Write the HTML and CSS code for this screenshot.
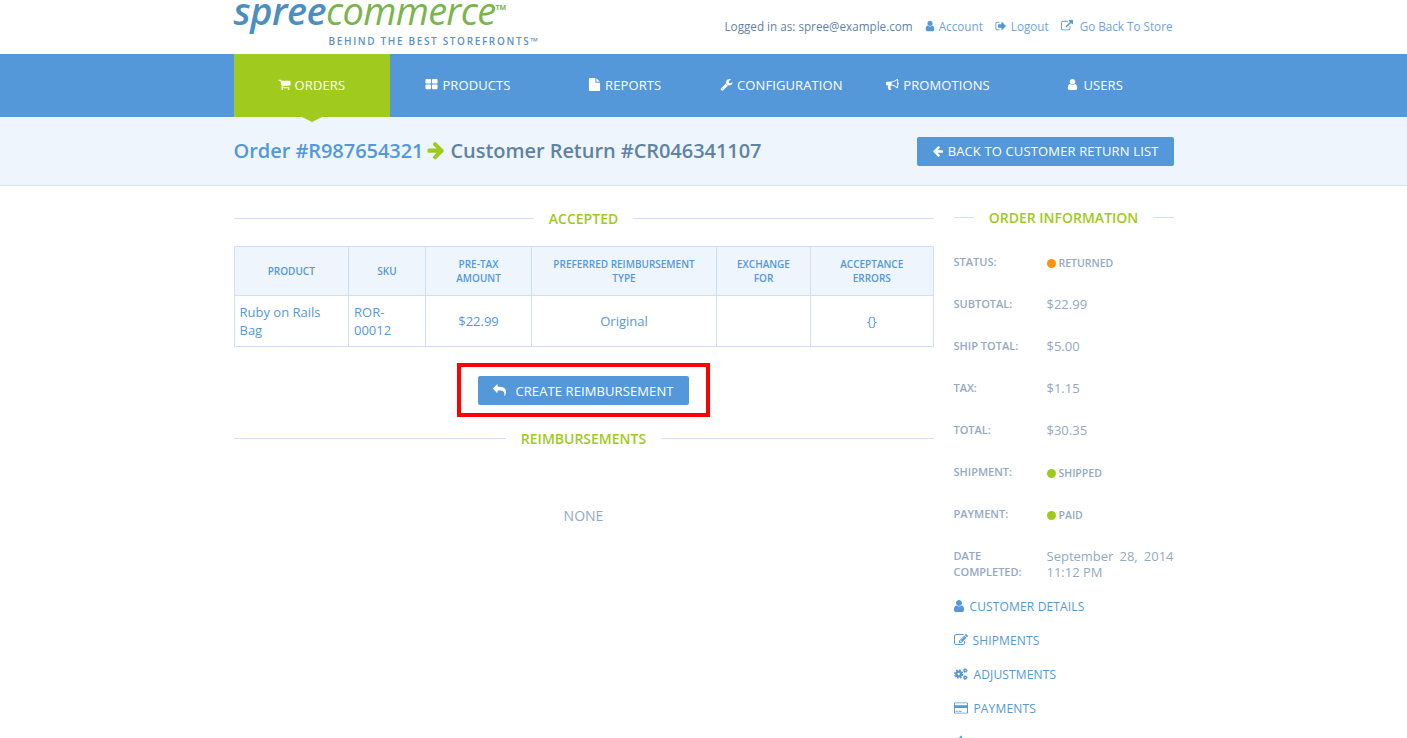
FILE: index.html
```html
<!DOCTYPE html>
<html>
<head>
    <meta charset="UTF-8">
    <title>Customer Return</title>
    <link rel="stylesheet" href="styles.css">
</head>
<body>

<svg class="sprite" xmlns="http://www.w3.org/2000/svg">
    <symbol id="i-user" viewBox="0 0 1792 1792"><path d="M1536 1399q0 109-62.5 187t-150.5 78h-854q-88 0-150.5-78t-62.5-187q0-85 8.5-160.5t31.5-152 58.5-131 94-89 134.5-34.5q131 128 313 128t313-128q76 0 134.5 34.5t94 89 58.5 131 31.5 152 8.5 160.5zm-256-887q0 159-112.5 271.5t-271.5 112.5-271.5-112.5-112.5-271.5 112.5-271.5 271.5-112.5 271.5 112.5 112.5 271.5z"/></symbol>
    <symbol id="i-cart" viewBox="0 0 1792 1792"><path d="M704 1536q0 52-38 90t-90 38-90-38-38-90 38-90 90-38 90 38 38 90zm896 0q0 52-38 90t-90 38-90-38-38-90 38-90 90-38 90 38 38 90zm128-1088v512q0 24-16.5 42.5t-40.5 21.5l-1044 122q13 60 13 70 0 16-24 64h920q26 0 45 19t19 45-19 45-45 19h-1024q-26 0-45-19t-19-45q0-11 8-31.5t16-36 21.5-40 15.5-29.5l-177-823h-204q-26 0-45-19t-19-45 19-45 45-19h256q16 0 28.5 6.5t19.5 15.5 13 24.5 8 26 5.5 29.5 4.5 26h1201q26 0 45 19t19 45z"/></symbol>
    <symbol id="i-grid" viewBox="0 0 1792 1792"><path d="M832 1024v384q0 52-38 90t-90 38h-512q-52 0-90-38t-38-90v-384q0-52 38-90t90-38h512q52 0 90 38t38 90zm0-768v384q0 52-38 90t-90 38h-512q-52 0-90-38t-38-90v-384q0-52 38-90t90-38h512q52 0 90 38t38 90zm896 768v384q0 52-38 90t-90 38h-512q-52 0-90-38t-38-90v-384q0-52 38-90t90-38h512q52 0 90 38t38 90zm0-768v384q0 52-38 90t-90 38h-512q-52 0-90-38t-38-90v-384q0-52 38-90t90-38h512q52 0 90 38t38 90z"/></symbol>
    <symbol id="i-file" viewBox="0 0 1792 1792"><path d="M1152 512v-472q22 14 36 28l408 408q14 14 28 36h-472zm-128 32q0 40 28 68t68 28h544v1056q0 40-28 68t-68 28h-1344q-40 0-68-28t-28-68v-1600q0-40 28-68t68-28h800v544z"/></symbol>
    <symbol id="i-wrench" viewBox="0 0 1792 1792"><path d="M448 1472q0-26-19-45t-45-19-45 19-19 45 19 45 45 19 45-19 19-45zm644-420l-682 682q-37 37-90 37-52 0-91-37l-106-108q-38-36-38-90 0-53 38-91l681-681q39 98 114.5 173.5t173.5 114.5zm634-435q0 39-23 106-47 134-164.5 217.5t-258.5 83.5q-185 0-316.5-131.5t-131.5-316.5 131.5-316.5 316.5-131.5q58 0 121.5 16.5t107.5 46.5q16 11 16 28t-16 28l-293 169v224l193 107q5-3 79-48.5t135.5-81 70.5-35.5q15 0 23.5 10t8.5 25z"/></symbol>
    <symbol id="i-bullhorn" viewBox="0 0 1792 1792"><path d="M1664 640q53 0 90.5 37.5t37.5 90.5-37.5 90.5-90.5 37.5v384q0 52-38 90t-90 38q-417-347-812-380-58 19-91 66t-31 100.5 40 92.5q-20 33-23 65.5t6 58 33.5 55 48 50 61.5 50.5q-29 58-111.5 83t-168.5 11.5-132-55.5q-7-23-29.5-87.5t-32-94.5-23-89-15-101 3.5-98.5 22-110.5h-122q-66 0-113-47t-47-113v-192q0-66 47-113t113-47h480q435 0 896-384 52 0 90 38t38 90v384zm-128 604v-954q-394 302-768 343v270q377 42 768 341z"/></symbol>
    <symbol id="i-right" viewBox="0 0 1792 1792"><path d="M1600 960q0 54-37 91l-651 651q-39 37-91 37-51 0-90-37l-75-75q-38-38-38-91t38-91l293-293h-704q-52 0-84.5-37.5t-32.5-90.5v-128q0-53 32.5-90.5t84.5-37.5h704l-293-294q-38-36-38-90t38-90l75-75q38-38 90-38 53 0 91 38l651 651q37 35 37 90z"/></symbol>
    <symbol id="i-left" viewBox="0 0 1792 1792"><path d="M1664 896v128q0 53-32.5 90.5t-84.5 37.5h-704l293 294q38 36 38 90t-38 90l-75 76q-37 37-90 37-52 0-91-37l-651-652q-37-37-37-90 0-52 37-91l651-650q38-38 91-38 52 0 90 38l75 74q38 38 38 91t-38 91l-293 293h704q52 0 84.5 37.5t32.5 90.5z"/></symbol>
    <symbol id="i-reply" viewBox="0 0 1792 1792"><path d="M1792 1120q0 166-127 451-3 7-10.5 24t-13.5 30-13 22q-12 17-28 17-15 0-23.5-10t-8.5-25q0-9 2.5-26.5t2.5-23.5q5-68 5-123 0-101-17.5-181t-48.5-138.5-80-101-105.5-69.5-133-42.5-154-21.5-175.5-6h-224v256q0 26-19 45t-45 19-45-19l-512-512q-19-19-19-45t19-45l512-512q19-19 45-19t45 19 19 45v256h224q713 0 875 403 53 134 53 333z"/></symbol>
    <symbol id="i-signout" viewBox="0 0 1792 1792"><path d="M704 1440q0 4 1 20t.5 26.5-3 23.5-10 19.5-20.5 6.5h-320q-119 0-203.5-84.5t-84.5-203.5v-704q0-119 84.5-203.5t203.5-84.5h320q13 0 22.5 9.5t9.5 22.5q0 4 1 20t.5 26.5-3 23.5-10 19.5-20.5 6.5h-320q-66 0-113 47t-47 113v704q0 66 47 113t113 47h312l11.5 1 11.5 3 8 5.5 7 9 2 13.5zm928-544q0 26-19 45l-544 544q-19 19-45 19t-45-19-19-45v-288h-448q-26 0-45-19t-19-45v-384q0-26 19-45t45-19h448v-288q0-26 19-45t45-19 45 19l544 544q19 19 19 45z"/></symbol>
    <symbol id="i-external" viewBox="0 0 1792 1792"><path d="M1408 928v320q0 119-84.5 203.5t-203.5 84.5h-832q-119 0-203.5-84.5t-84.5-203.5v-832q0-119 84.5-203.5t203.5-84.5h704q14 0 23 9t9 23v64q0 14-9 23t-23 9h-704q-66 0-113 47t-47 113v832q0 66 47 113t113 47h832q66 0 113-47t47-113v-320q0-14 9-23t23-9h64q14 0 23 9t9 23zm384-864v512q0 26-19 45t-45 19-45-19l-176-176-652 652q-10 10-23 10t-23-10l-114-114q-10-10-10-23t10-23l652-652-176-176q-19-19-19-45t19-45 45-19h512q26 0 45 19t19 45z"/></symbol>
    <symbol id="i-edit" viewBox="0 0 1792 1792"><path d="M888 1184l116-116-152-152-116 116v56h96v96h56zm440-720q-16-16-33 1l-350 350q-17 17-1 33t33-1l350-350q17-17 1-33zm80 594v190q0 119-84.5 203.5t-203.5 84.5h-832q-119 0-203.5-84.5t-84.5-203.5v-832q0-119 84.5-203.5t203.5-84.5h832q63 0 117 25 15 7 18 23 3 17-9 29l-49 49q-14 14-32 8-23-6-45-6h-832q-66 0-113 47t-47 113v832q0 66 47 113t113 47h832q66 0 113-47t47-113v-126q0-13 9-22l64-64q15-15 35-7t20 29zm-96-738l288 288-672 672h-288v-288zm444 132l-92 92-288-288 92-92q28-28 68-28t68 28l152 152q28 28 28 68t-28 68z"/></symbol>
    <symbol id="i-cogs" viewBox="0 0 1792 1792">
        <circle cx="600" cy="900" r="300" fill="none" stroke="currentColor" stroke-width="300"/>
        <circle cx="600" cy="900" r="510" fill="none" stroke="currentColor" stroke-width="180" stroke-dasharray="220 180"/>
        <circle cx="1440" cy="450" r="150" fill="none" stroke="currentColor" stroke-width="170"/>
        <circle cx="1440" cy="450" r="270" fill="none" stroke="currentColor" stroke-width="110" stroke-dasharray="105 107"/>
        <circle cx="1440" cy="1350" r="150" fill="none" stroke="currentColor" stroke-width="170"/>
        <circle cx="1440" cy="1350" r="270" fill="none" stroke="currentColor" stroke-width="110" stroke-dasharray="105 107"/>
    </symbol>
    <symbol id="i-card" viewBox="0 0 1920 1792"><path d="M1760 128q66 0 113 47t47 113v1216q0 66-47 113t-113 47h-1600q-66 0-113-47t-47-113v-1216q0-66 47-113t113-47h1600zm-1600 128q-13 0-22.5 9.5t-9.5 22.5v224h1664v-224q0-13-9.5-22.5t-22.5-9.5h-1600zm1600 1280q13 0 22.5-9.5t9.5-22.5v-608h-1664v608q0 13 9.5 22.5t22.5 9.5h1600zm-1504-128v-128h256v128h-256zm384 0v-128h384v128h-384z"/></symbol>
</svg>

<div class="m-top">
    <div class="wrap top-row">
        <div class="logo">
            <div class="logo-name"><span class="logo-spree">spree</span><span class="logo-commerce">commerce</span><span class="logo-tm">TM</span></div>
            <div class="logo-tag">BEHIND THE BEST STOREFRONTS&trade;</div>
        </div>
        <div class="user-nav">
            <span class="logged">Logged in as: spree@example.com</span>
            <a href="#"><svg class="ico"><use href="#i-user"/></svg>Account</a>
            <a href="#"><svg class="ico ico-out"><use href="#i-signout"/></svg>Logout</a>
            <a href="#"><svg class="ico ico-ext"><use href="#i-external"/></svg>Go Back To Store</a>
        </div>
    </div>
</div>

<div class="m-nav">
    <div class="wrap nav-row">
        <a href="#" class="nav-item on"><svg class="ico"><use href="#i-cart"/></svg>ORDERS</a>
        <a href="#" class="nav-item"><svg class="ico"><use href="#i-grid"/></svg>PRODUCTS</a>
        <a href="#" class="nav-item"><svg class="ico"><use href="#i-file"/></svg>REPORTS</a>
        <a href="#" class="nav-item"><svg class="ico"><use href="#i-wrench"/></svg>CONFIGURATION</a>
        <a href="#" class="nav-item"><svg class="ico"><use href="#i-bullhorn"/></svg>PROMOTIONS</a>
        <a href="#" class="nav-item"><svg class="ico"><use href="#i-user"/></svg>USERS</a>
    </div>
</div>

<div class="m-sub">
    <div class="wrap sub-row">
        <h1 class="page-title"><a href="#">Order #R987654321</a><svg class="title-arrow"><use href="#i-right"/></svg>Customer Return #CR046341107</h1>
        <a href="#" class="btn"><svg class="ico"><use href="#i-left"/></svg>BACK TO CUSTOMER RETURN LIST</a>
    </div>
</div>

<div class="wrap m-main">
    <div class="col-left">
        <h2 class="sec-title">ACCEPTED</h2>
        <table class="u-table">
            <colgroup>
                <col class="c1"><col class="c2"><col class="c3"><col class="c4"><col class="c5"><col class="c6">
            </colgroup>
            <thead>
                <tr>
                    <th>PRODUCT</th>
                    <th>SKU</th>
                    <th>PRE-TAX AMOUNT</th>
                    <th>PREFERRED REIMBURSEMENT TYPE</th>
                    <th>EXCHANGE FOR</th>
                    <th>ACCEPTANCE ERRORS</th>
                </tr>
            </thead>
            <tbody>
                <tr>
                    <td class="left">Ruby on Rails Bag</td>
                    <td class="left">ROR-00012</td>
                    <td>$22.99</td>
                    <td>Original</td>
                    <td></td>
                    <td>{}</td>
                </tr>
            </tbody>
        </table>
        <div class="btn-row">
            <div class="highlight">
                <a href="#" class="btn btn-create"><svg class="ico"><use href="#i-reply"/></svg>CREATE REIMBURSEMENT</a>
            </div>
        </div>
        <h2 class="sec-title sec-second">REIMBURSEMENTS</h2>
        <div class="none">NONE</div>
    </div>

    <div class="col-right">
        <h2 class="sec-title sec-side">ORDER INFORMATION</h2>
        <dl class="info">
            <div class="info-row"><dt>STATUS:</dt><dd class="state"><i class="dot dot-orange"></i>RETURNED</dd></div>
            <div class="info-row"><dt>SUBTOTAL:</dt><dd>$22.99</dd></div>
            <div class="info-row"><dt>SHIP TOTAL:</dt><dd>$5.00</dd></div>
            <div class="info-row"><dt>TAX:</dt><dd>$1.15</dd></div>
            <div class="info-row"><dt>TOTAL:</dt><dd>$30.35</dd></div>
            <div class="info-row"><dt>SHIPMENT:</dt><dd class="state"><i class="dot"></i>SHIPPED</dd></div>
            <div class="info-row"><dt>PAYMENT:</dt><dd class="state"><i class="dot"></i>PAID</dd></div>
            <div class="info-row"><dt>DATE COMPLETED:</dt><dd class="date">September 28, 2014 11:12 PM</dd></div>
        </dl>
        <ul class="side-links">
            <li><a href="#"><svg class="ico ico-user"><use href="#i-user"/></svg>CUSTOMER DETAILS</a></li>
            <li><a href="#"><svg class="ico ico-edit"><use href="#i-edit"/></svg>SHIPMENTS</a></li>
            <li><a href="#"><svg class="ico"><use href="#i-cogs"/></svg>ADJUSTMENTS</a></li>
            <li><a href="#"><svg class="ico"><use href="#i-card"/></svg>PAYMENTS</a></li>
            <li><a href="#"><svg class="ico ico-peek"><use href="#i-reply"/></svg></a></li>
        </ul>
    </div>
</div>

</body>
</html>
```

FILE: styles.css
```css
* {margin: 0; padding: 0; box-sizing: border-box;}
html, body {height: 738px; overflow: hidden;}
body {background: #fff; font-family: "Open Sans", sans-serif; font-size: 13px; color: #5f83a5;}
a {color: #5498da; text-decoration: none;}
ul {list-style: none;}
.sprite {display: none;}
.wrap {width: 940px; margin: 0 auto;}
.ico {width: 12px; height: 12px; fill: currentColor; flex: none;}

/* top bar */
.m-top {height: 54px;}
.top-row {display: flex; justify-content: space-between; height: 54px;}
.logo {width: 320px; color: #5b92c2;}
.logo-name {display: flex; height: 20px; line-height: 20px; font-size: 38px; font-style: italic; white-space: nowrap;}
.logo-spree {font-weight: 600; color: #4a8fc0; letter-spacing: -.5px;}
.logo-commerce {color: #79b54c; font-weight: 400; letter-spacing: -.7px;}
.logo-tm {margin-top: 2px; font-size: 7px; line-height: 12px; font-style: normal; font-weight: 700; color: #79b54c;}
.logo-tag {margin: 14px 0 0 95px; font-size: 10px; line-height: 14px; font-weight: 600; letter-spacing: 1.65px; white-space: nowrap;}
.user-nav {display: flex; align-items: center; height: 54px; padding: 0 1px 2px 0; font-size: 11.7px;}
.user-nav a {display: flex; align-items: center; margin-left: 12px; color: #6fa3dc;}
.user-nav .ico {margin-right: 3px; color: #5498da;}
.user-nav .ico-out {margin-right: 4px;}
.user-nav .ico-ext {margin-right: 7px;}
.logged {margin-right: -1px; color: #5f83a5;}

/* main menu */
.m-nav {background: #5498da; height: 63px;}
.nav-row {display: flex; height: 63px;}
.nav-item {flex: 1; display: flex; align-items: center; justify-content: center; position: relative; padding: 0 1px 2px 0; color: #fff; font-size: 13px; letter-spacing: .1px;}
.nav-item .ico {width: 13px; height: 13px; margin-right: 4px;}
.nav-item.on {background: #a0ca1e;}
.nav-item.on:after {content: ""; position: absolute; left: 50%; bottom: -5px; margin-left: -10px; border-style: solid; border-width: 5px 10px 0; border-color: #a0ca1e transparent transparent;}

/* page title */
.m-sub {background: #eef5fc; height: 69px; border-bottom: 1px solid #d5e2f0;}
.sub-row {display: flex; justify-content: space-between; align-items: center; height: 68px;}
.page-title {display: flex; align-items: center; margin-bottom: 2px; font-size: 20px; font-weight: 600; letter-spacing: -.05px; color: #5f83a5; white-space: nowrap;}
.title-arrow {width: 20px; height: 20px; margin: 0 4px 0 3px; fill: #9fca1d;}
.btn {display: flex; align-items: center; background: #5498da; color: #fff; border-radius: 2px; height: 29px; padding: 0 15px; font-size: 13px; letter-spacing: .14px; white-space: nowrap;}
.btn .ico {margin-right: 4px;}

/* content */
.m-main {display: flex; justify-content: space-between; padding-top: 23px;}
.col-left {width: 700px;}
.col-right {width: 220px;}
.sec-title {display: flex; align-items: center; font-size: 14px; line-height: 19px; font-weight: 600; color: #9fca1d;}
.sec-title:before, .sec-title:after {content: ""; flex: 1; border-top: 1px solid #d0e0f4;}
.sec-title:before {margin-right: 15px;}
.sec-title:after {margin-left: 15px;}
.sec-side {margin-top: -1px;}
.sec-second {margin-top: 12px;}

.u-table {width: 700px; margin-top: 18px; border-collapse: collapse; table-layout: fixed; color: #5498da;}
.c1 {width: 114.5px;}
.c2 {width: 77px;}
.c3 {width: 106px;}
.c4 {width: 185px;}
.c5 {width: 94px;}
.u-table th, .u-table td {border: 1px solid #d0e0f4; text-align: center; vertical-align: middle;}
.u-table th {background: #eef5fc; height: 49px; padding: 0 15px; font-size: 10px; line-height: 14px; font-weight: 600;}
.u-table td {height: 51px; padding: 0 5px; font-size: 13px; line-height: 18px;}
.u-table td.left {text-align: left;}

.btn-row {display: flex; justify-content: center; margin-top: 16px;}
.highlight {border: 4px solid #f00; padding: 9px 17px 8px;}
.btn-create {letter-spacing: .1px;}
.btn-create .ico {margin-right: 9px; width: 13px; height: 13px;}
.none {text-align: center; margin-top: 58px; font-size: 14px; color: #93a9c3;}

/* sidebar */
.info {margin-top: 27px;}
.info-row {display: flex; align-items: flex-start; height: 42px; color: #93a9c3;}
.info-row dt {width: 93px; flex: none; font-size: 11px; line-height: 16px; font-weight: 600;}
.info-row dd {flex: 1; font-size: 13px; line-height: 17px;}
.info-row .state {display: flex; align-items: center; margin-top: 1px; font-size: 10.5px; font-weight: 600;}
.info-row .date {line-height: 16px; text-align: justify;}
.dot {width: 9px; height: 9px; margin-right: 3px; border-radius: 50%; background: #9fca1d;}
.dot-orange {background: #ff9300;}
.side-links {margin-top: 7px;}
.side-links li {height: 34px;}
.side-links a {display: flex; align-items: center; height: 18px; font-size: 12px; letter-spacing: .15px;}
.side-links .ico {width: 14px; height: 14px; margin-right: 6px;}
.side-links .ico-user {margin-left: -2px; margin-right: 4px;}
.side-links .ico-edit {margin-right: 5px;}
.side-links .ico-peek {margin-left: 3px;}
```
